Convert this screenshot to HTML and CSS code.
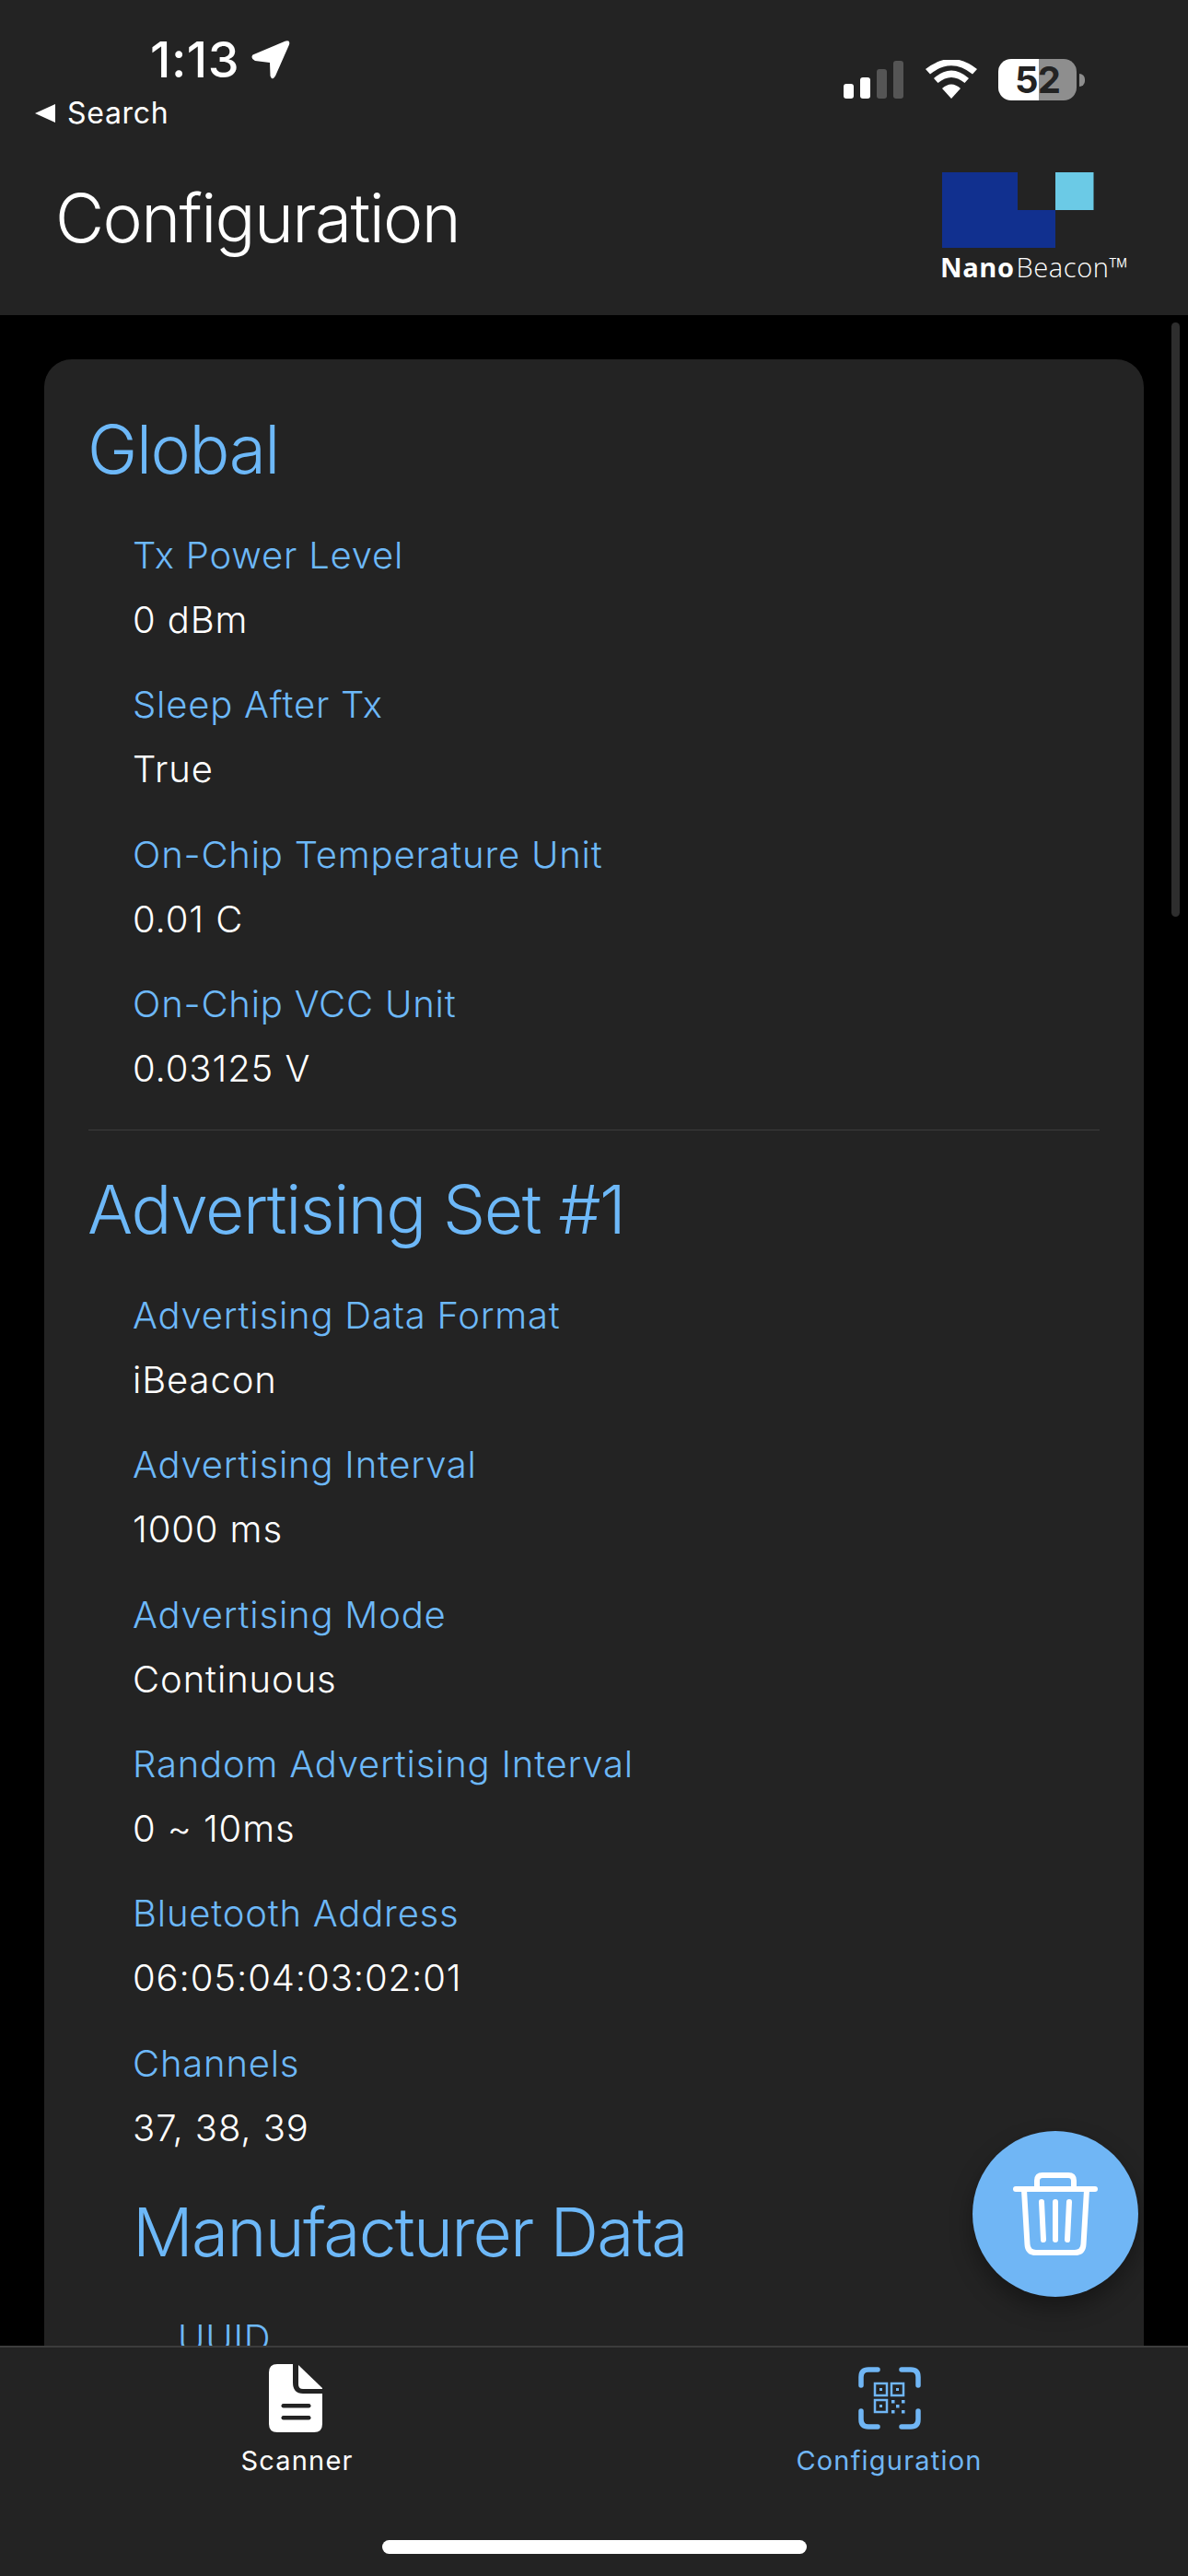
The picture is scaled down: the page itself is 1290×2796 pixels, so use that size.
FILE: index.html
```html
<!DOCTYPE html>
<html>
<head>
  <meta charset="UTF-8" />
  <title>Configuration</title>
  <link rel="stylesheet" href="styles.css">
</head>
<body>
  <div class="phone">
    <header class="top">
      <div class="status">
        <div class="status-left">
          <div class="clock">
            <span>1:13</span>
            <svg class="arrow" width="42" height="42" viewBox="0 0 42 42"><path d="M1.500 15.500 L36.500 0.800 Q42.500 -1 41 4.500 L26 38.500 Q22.500 44 20.500 38.500 L20 24 L4 22 Q-1.500 19 1.500 15.500 Z" fill="#fff"/></svg>
          </div>
          <div class="back"><span class="back-tri"></span>Search</div>
        </div>
        <div class="status-right">
          <div class="bars">
            <span class="bar b1"></span>
            <span class="bar b2"></span>
            <span class="bar b3"></span>
            <span class="bar b4"></span>
          </div>
          <svg class="wifi" width="58" height="42" viewBox="0 0 58 42">
            <path d="M29 42 L19 31 Q29 22 39 31 Z" fill="#fff"/>
            <path d="M14.500 25 L10 20 Q29 3 48 20 L43.500 25 Q29 13 14.500 25 Z" fill="#fff"/>
            <path d="M6 15.500 L1 10 Q29 -12 57 10 L52 15.500 Q29 -3 6 15.500 Z" fill="#fff"/>
          </svg>
          <div class="battery">
            <div class="batt-body"><span class="batt-num">52</span></div>
            <span class="batt-cap"></span>
          </div>
        </div>
      </div>
      <div class="title-row">
        <h1>Configuration</h1>
        <div class="logo">
          <svg width="165" height="83" viewBox="0 0 165 83">
            <path d="M0 0 H82 V41 H123 V82 H0 Z" fill="#11308f"/>
            <rect x="123" y="0" width="41.500" height="41" fill="#6bcae6"/>
          </svg>
          <div class="logo-text"><b>Nano</b>Beacon™</div>
        </div>
      </div>
    </header>

    <main class="content">
      <div class="scroll-thumb"></div>
      <section class="card">
        <h2>Global</h2>
        <div class="fields">
          <div class="field"><div class="key">Tx Power Level</div><div class="val">0 dBm</div></div>
          <div class="field"><div class="key">Sleep After Tx</div><div class="val">True</div></div>
          <div class="field"><div class="key">On-Chip Temperature Unit</div><div class="val">0.01 C</div></div>
          <div class="field"><div class="key">On-Chip VCC Unit</div><div class="val">0.03125 V</div></div>
        </div>
        <hr class="divider">
        <h2>Advertising Set #1</h2>
        <div class="fields">
          <div class="field"><div class="key">Advertising Data Format</div><div class="val">iBeacon</div></div>
          <div class="field"><div class="key">Advertising Interval</div><div class="val">1000 ms</div></div>
          <div class="field"><div class="key">Advertising Mode</div><div class="val">Continuous</div></div>
          <div class="field"><div class="key">Random Advertising Interval</div><div class="val">0 ~ 10ms</div></div>
          <div class="field"><div class="key">Bluetooth Address</div><div class="val">06:05:04:03:02:01</div></div>
          <div class="field"><div class="key">Channels</div><div class="val">37, 38, 39</div></div>
          <h2 class="sub">Manufacturer Data</h2>
          <div class="fields">
            <div class="field"><div class="key">UUID</div></div>
          </div>
        </div>
      </section>
      <button class="fab">
        <svg width="92" height="92" viewBox="0 0 92 92" fill="none" stroke="#fff" stroke-width="6" stroke-linecap="round" stroke-linejoin="round">
          <path d="M3 19 H89"/>
          <path d="M26 17 V10 Q26 4 32 4 H60 Q66 4 66 10 V17"/>
          <path d="M12 20 L15.500 79 Q16 88 25 88 H67 Q76 88 76.500 79 L80 20"/>
          <path d="M31 33 L33 74 M46 33 V74 M61 33 L59 74"/>
        </svg>
      </button>
    </main>

    <nav class="tabs">
      <div class="tab">
        <svg class="doc-icon" width="58" height="74" viewBox="0 0 58 74">
          <path d="M9 0 H26 V20 Q26 32 37 32 H58 V65 Q58 74 49 74 H9 Q0 74 0 65 V9 Q0 0 9 0 Z" fill="#fff"/>
          <path d="M32 1 L58 26 V27 H37 Q32 27 32 22 Z" fill="#fff"/>
          <rect x="13.500" y="43" width="32" height="4.500" rx="2.200" fill="#232323"/>
          <rect x="13.500" y="56" width="32" height="4.500" rx="2.200" fill="#232323"/>
        </svg>
        <span class="tab-label">Scanner</span>
      </div>
      <div class="tab tab-on">
        <svg width="68" height="68" viewBox="0 0 68 68" fill="none" stroke="#70b6f5" stroke-linecap="round">
          <g stroke-width="5.500">
            <path d="M3 20 V11 Q3 3 11 3 H21"/>
            <path d="M47 3 H57 Q65 3 65 11 V20"/>
            <path d="M3 48 V57 Q3 65 11 65 H21"/>
            <path d="M47 65 H57 Q65 65 65 57 V48"/>
          </g>
          <g stroke-width="2.500" stroke-linecap="butt">
            <rect x="18" y="18" width="13" height="13"/>
            <rect x="36" y="18" width="13" height="13"/>
            <rect x="18" y="36" width="13" height="13"/>
          </g>
          <g fill="#70b6f5" stroke="none">
            <rect x="23" y="23" width="3" height="3"/>
            <rect x="41" y="23" width="3" height="3"/>
            <rect x="23" y="41" width="3" height="3"/>
            <rect x="36" y="36" width="3.500" height="3.500"/>
            <rect x="47" y="36" width="3.500" height="3.500"/>
            <rect x="41" y="41" width="3.500" height="3.500"/>
            <rect x="36" y="47" width="3.500" height="3.500"/>
            <rect x="47" y="47" width="3.500" height="3.500"/>
          </g>
        </svg>
        <span class="tab-label">Configuration</span>
      </div>
      <div class="home-bar"></div>
    </nav>
  </div>
</body>
</html>
```

FILE: styles.css
```css
* {
  box-sizing: border-box;
}
html, body {
  margin: 0;
  background: #000;
}
body {
  font-family: Inter, "Liberation Sans", sans-serif;
  color: #fff;
}
.phone {
  width: 1290px;
  height: 2796px;
  display: flex;
  flex-direction: column;
  overflow: hidden;
}

/* top bar */
.top {
  background: #232323;
  height: 342px;
  flex: none;
}
.status {
  display: flex;
  justify-content: space-between;
  height: 150px;
}
.status-left {
  padding: 42px 0 0 38px;
}
.clock {
  display: flex;
  align-items: center;
  gap: 13px;
  margin-left: 125px;
  height: 46px;
  font-size: 54px;
  font-weight: 500;
  line-height: 46px;
  letter-spacing: 0.5px;
}
.back {
  display: flex;
  align-items: center;
  margin-top: 15px;
  font-size: 32px;
  line-height: 40px;
  letter-spacing: 0.7px;
}
.back-tri {
  width: 0;
  height: 0;
  border-top: 10px solid transparent;
  border-bottom: 10px solid transparent;
  border-right: 22px solid #fff;
  margin-right: 13px;
}
.status-right {
  display: flex;
  align-items: flex-start;
  padding: 64px 112px 0 0;
}
.bars {
  display: flex;
  align-items: flex-end;
  gap: 7px;
  height: 41px;
  margin: 2px 23px 0 0;
}
.bar {
  width: 11px;
  border-radius: 3px;
  background: #fff;
}
.b1 { height: 16px; }
.b2 { height: 23px; }
.b3 { height: 32px; background: #555; }
.b4 { height: 41px; background: #555; }
.wifi {
  margin: 1px 22px 0 0;
}
.battery {
  display: flex;
  align-items: center;
}
.batt-body {
  width: 85px;
  height: 45px;
  border-radius: 14px;
  background: linear-gradient(90deg, #fff 0 52%, #8e8e8e 52% 100%);
  display: flex;
  align-items: center;
  justify-content: center;
}
.batt-num {
  color: #232323;
  font-size: 40px;
  font-weight: 700;
  line-height: 1;
  letter-spacing: -1px;
}
.batt-cap {
  width: 6px;
  height: 14px;
  margin-left: 3px;
  border-radius: 0 7px 7px 0;
  background: #8e8e8e;
}
.title-row {
  display: flex;
  justify-content: space-between;
  padding: 0 67px 0 60px;
}
h1 {
  margin: 46px 0 0;
  font-size: 73px;
  font-weight: 300;
  line-height: 82px;
  letter-spacing: -1.6px;
}
.logo {
  width: 200px;
  margin-top: 37px;
}
.logo svg {
  display: block;
}
.logo-text {
  margin-top: 2px;
  margin-left: -2px;
  font-family: "Open Sans", sans-serif;
  font-size: 29px;
  font-weight: 300;
  line-height: 36px;
  letter-spacing: 0.6px;
  white-space: nowrap;
}
.logo-text b {
  font-weight: 700;
  margin-right: 2px;
}

/* scrolling content */
.content {
  flex: 1;
  min-height: 0;
  position: relative;
  overflow: hidden;
  padding: 48px 48px 0;
}
.scroll-thumb {
  position: absolute;
  top: 8px;
  right: 9px;
  width: 9px;
  height: 645px;
  border-radius: 5px;
  background: #2e2e2e;
}
.card {
  background: #232323;
  border-radius: 30px;
  padding: 56px 48px 48px 47px;
  height: 2400px;
}
h2 {
  margin: 0;
  color: #6db8f8;
  font-size: 73px;
  font-weight: 300;
  line-height: 84px;
  letter-spacing: -1.4px;
}
h2.sub {
  margin-top: 36px;
  letter-spacing: -1.7px;
}
.fields {
  padding: 38px 0 0 49px;
}
.field {
  margin-bottom: 22.35px;
}
.key {
  color: #6db8f8;
  font-size: 40px;
  font-weight: 300;
  line-height: 70px;
  letter-spacing: 0.8px;
}
.val {
  font-size: 40px;
  font-weight: 300;
  line-height: 70px;
  letter-spacing: 0.9px;
}
.divider {
  border: 0;
  height: 1px;
  margin: 31px 0 44px 1px;
  background: #3c3c3c;
}
.fab {
  position: absolute;
  left: 1056px;
  top: 1971px;
  width: 180px;
  height: 180px;
  border: 0;
  border-radius: 50%;
  padding: 0;
  background: #70b6f5;
  box-shadow: 0 12px 24px rgba(0, 0, 0, 0.35);
  display: flex;
  align-items: center;
  justify-content: center;
}

/* bottom tabs */
.tabs {
  position: relative;
  flex: none;
  height: 250px;
  background: #232323;
  border-top: 2px solid #3c3c3c;
  display: flex;
  padding-top: 18px;
}
.tab {
  width: 645px;
  display: flex;
  flex-direction: column;
  align-items: center;
}
.tab svg {
  height: 74px;
}
.tab svg.doc-icon {
  margin-right: 3px;
}
.tab-label {
  margin-top: 11px;
  font-size: 29px;
  line-height: 40px;
  letter-spacing: 1.2px;
}
.tab-on {
  padding-right: 4px;
}
.tab-on .tab-label {
  color: #70b6f5;
}
.home-bar {
  position: absolute;
  left: 415px;
  bottom: 24px;
  width: 461px;
  height: 15px;
  border-radius: 8px;
  background: #fff;
}
```
